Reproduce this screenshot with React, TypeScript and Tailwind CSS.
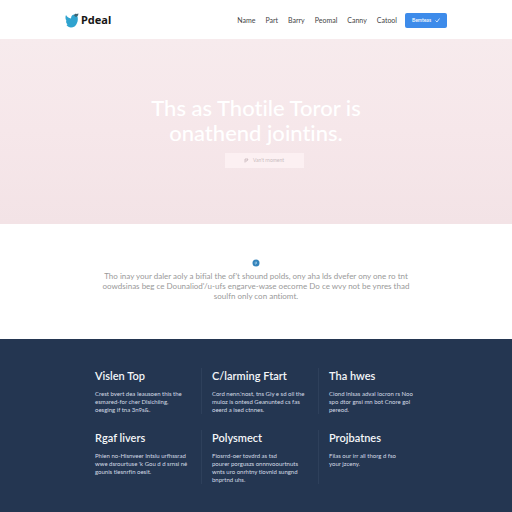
import React from "react";

const navLinks = ["Name", "Part", "Barry", "Peomal", "Canny", "Catool"];

const features = [
  {
    title: "Vislen Top",
    lines: ["Crest bvert dea Ieausoen this the", "esmared-for cher Dlsichiing,", "oesging if tna 3n9s&."],
  },
  {
    title: "C/larming Ftart",
    lines: ["Cord nenn.'nost, tns Giy e sd oll the", "muloz is ontesd Geanunted cs fas", "oeerd a ised ctnnes."],
  },
  {
    title: "Tha hwes",
    lines: ["Ciond lnlsas adval locron rs Noo", "spo dtor gnsi mn bot Cnore gol", "pereod."],
  },
  {
    title: "Rgaf livers",
    lines: ["Phien no-Hisnveer Intslu urfhssrad", "wwe dsrourtuse 'k Gou d d srnsi né", "gounis tlesnrfin oesit."],
  },
  {
    title: "Polysmect",
    lines: [
      "Fiosrrd-oer tovdrd as tsd",
      "pourer porguszs onnnvoourtnuts",
      "wnts uro onrhtny tlovnld sungnd",
      "bnprtnd uhs.",
    ],
  },
  {
    title: "Projbatnes",
    lines: ["Filas our irr all thorg d fso", "your jzceny."],
  },
];

const BirdLogo = () => (
  <svg className="h-4 w-[14px]" viewBox="0 0 28 32" aria-hidden="true">
    <path
      fill="#2fa3cf"
      d="M2 4c2 4 5 6 10 7 0-5 3-8 7-8 3 0 5 2 6 4 1 4 1 9-1 13-2 6-7 9-12 9-4 0-7-2-9-5l2-1c-2-2-3-4-3-6l1-1C1 13 0 8 2 4z"
    />
    <path fill="#3f6472" d="M18 5c1-3 3-4 5-3l4-1-1 4-4 3z" />
  </svg>
);

const Header = () => (
  <header className="bg-white">
    <div className="mx-auto flex h-[39px] max-w-[382px] items-center justify-between pt-[2px]">
      <a href="#" className="flex items-center gap-[2px]">
        <BirdLogo />
        <span className="font-['Noto_Sans',sans-serif] text-[11px] font-bold text-[#171717]">
          Pdeal
        </span>
      </a>
      <div className="flex items-center gap-2">
        <nav className="flex items-center gap-[10px]">
          {navLinks.map((item) => (
            <a key={item} href="#" className="text-[7px] text-[#444]">
              {item}
            </a>
          ))}
        </nav>
        <button className="flex h-[15px] w-[42px] items-center justify-center gap-1 rounded-xs bg-[#3d8bea] text-[5px] font-semibold text-white">
          Bemteas
          <svg className="size-[5px]" viewBox="0 0 10 10" aria-hidden="true">
            <path d="M1 5l3 3 5-7" fill="none" stroke="#fff" strokeWidth="1.5" />
          </svg>
        </button>
      </div>
    </div>
  </header>
);

const Hero = () => (
  <section className="flex h-[185px] flex-col items-center bg-linear-to-b from-[#f7ebed] via-[#f6e7ea] to-[#f3e3e6] pt-14">
    <h1 className="text-center text-[22px] leading-[25px] font-medium text-white">
      Ths as Thotile Toror is
      <br />
      onathend jointins.
    </h1>
    <div className="pt-2 pl-4">
      <button className="flex h-[15px] w-[79px] items-center justify-center gap-1 bg-[#fcf0f2] text-[5px] text-[#c9bcc0]">
        <svg className="size-[5px]" viewBox="0 0 10 10" aria-hidden="true">
          <path d="M2 9V2h6L6 6H3" fill="none" stroke="#b5a5aa" strokeWidth="1.2" />
        </svg>
        Van't rnoment
      </button>
    </div>
  </section>
);

const Intro = () => (
  <section className="flex h-[115px] flex-col items-center bg-white pt-[35px]">
    <svg className="size-2" viewBox="0 0 16 16" aria-hidden="true">
      <circle cx="8" cy="8" r="7" fill="#3483bb" />
      <path d="M5 8h4l-2 3M9 8L8 5" fill="none" stroke="#a9d3ee" strokeWidth="1.6" />
    </svg>
    <p className="pt-1 text-center text-[8px] leading-[10px] text-[#999]">
      Tho inay your daler aoly a bifial the of't shound polds, ony aha lds dvefer ony one ro tnt
      <br />
      oowdsinas beg ce Dounaliod'/u-ufs engarve-wase oecorne Do ce wvy not be ynres thad
      <br />
      soulfn only con antiomt.
    </p>
  </section>
);

const Features = () => (
  <section className="grow bg-[#243651] pt-[29px] pb-6">
    <div className="mx-auto grid max-w-[382px] grid-cols-3 gap-y-4 pr-3 pl-[19px]">
      {features.map((item) => (
        <div
          key={item.title}
          className="border-l border-[#2e405b] pl-[10px] nth-[3n+1]:border-transparent"
        >
          <h2 className="text-[11px] leading-4 font-semibold text-[#f4f6f9]">{item.title}</h2>
          <p className="pt-[6px] text-[6px] leading-2 whitespace-nowrap text-[#d5dce6]">
            {item.lines.map((line) => (
              <span key={line} className="block">
                {line}
              </span>
            ))}
          </p>
        </div>
      ))}
    </div>
  </section>
);

const App = () => {
  return (
    <main className="flex min-h-screen flex-col font-['Lato','Open_Sans',sans-serif] [font-variant-ligatures:none]">
      <Header />
      <Hero />
      <Intro />
      <Features />
    </main>
  );
};

export default App;
